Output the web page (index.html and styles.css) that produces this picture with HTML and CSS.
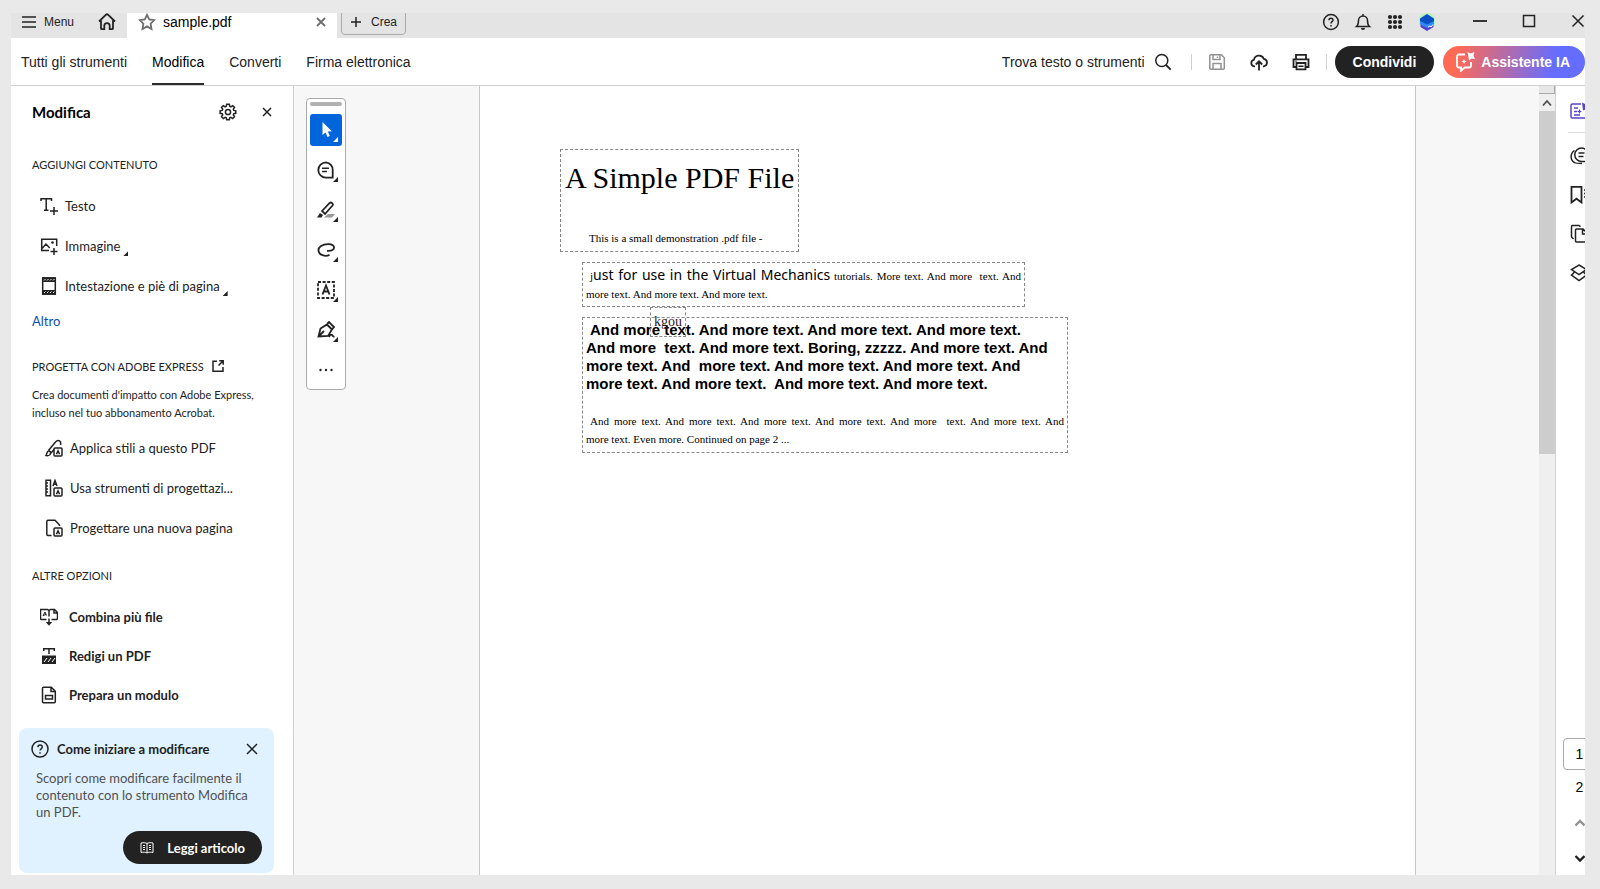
FILE: index.html
```html
<!DOCTYPE html>
<html lang="it">
<head>
<meta charset="utf-8">
<title>sample.pdf</title>
<link rel="stylesheet" href="styles.css">
</head>
<body>
<div class="app">
  <header class="tabbar">
    <button class="menu"><svg class="ic18" viewBox="0 0 18 18"><path d="M2 4h14M2 9h14M2 14h14"/></svg>Menu</button>
    <button class="home" aria-label="Home"><svg class="ic18" viewBox="0 0 18 18"><path class="heavy" d="M1 8.500 7.800 1.800a1.700 1.700 0 0 1 2.400 0L17 8.500M3 7.500v7.700c0 .7.4 1 1 1h2.300v-3.400a2.700 2.700 0 0 1 5.400 0v3.400H14c.6 0 1-.3 1-1V7.500"/></svg></button>
    <div class="tab">
      <svg class="ic18 grey" viewBox="0 0 18 18"><path class="heavy" d="m9 1.800 2.200 4.600 5 .7-3.600 3.600.9 5.300L9 13.400 4.500 16l.9-5.300L1.800 7.100l5-.7z"/></svg>
      <span class="tab-name">sample.pdf</span>
      <button class="tab-close" aria-label="Chiudi scheda"><svg class="ic10 grey" viewBox="0 0 10 10"><path class="heavy" d="m1 1 8 8M9 1 1 9"/></svg></button>
    </div>
    <button class="create"><svg class="ic10" viewBox="0 0 10 10"><path d="M5 0v10M0 5h10"/></svg>Crea</button>
    <div class="system">
      <button aria-label="Guida"><svg class="ic18" viewBox="0 0 18 18"><circle cx="9" cy="9" r="7.400"/><path d="M7 7.200c0-2.600 4-2.600 4 0 0 1.500-2 1.500-2 3.200M9 12v1.500"/></svg></button>
      <button aria-label="Notifiche"><svg class="ic18" viewBox="0 0 18 18"><path d="M2.500 13.500c2-1.700 2-3.500 2-6a4.500 4.500 0 0 1 9 0c0 2.500 0 4.300 2 6zM9 1v2"/><path class="fill" d="M7 15h4a2 2 0 0 1-4 0z"/></svg></button>
      <button aria-label="App"><svg class="ic18" viewBox="0 0 18 18"><g class="fill"><circle cx="4" cy="4" r="2.100"/><circle cx="9" cy="4" r="2.100"/><circle cx="14" cy="4" r="2.100"/><circle cx="4" cy="9" r="2.100"/><circle cx="9" cy="9" r="2.100"/><circle cx="14" cy="9" r="2.100"/><circle cx="4" cy="14" r="2.100"/><circle cx="9" cy="14" r="2.100"/><circle cx="14" cy="14" r="2.100"/></g></svg></button>
      <button aria-label="Profilo"><svg class="ic18" viewBox="0 0 18 18"><circle cx="9" cy="8.500" r="8.500" fill="#b4f5bd" stroke="none"/><path d="m2.500 10 6.500 3 6.500-3v4L9 18l-6.500-4z" fill="#5a3fd0" stroke="none"/><path d="m2 6 7 4 7-4v5l-7 4-7-4z" fill="#2f8bff" stroke="none"/><path d="m9 1 7 4.500V8l-7 3.500L2 8V5.500z" fill="#0b4fc4" stroke="none"/><path d="m10 14 2-1 1 1 2-2.500" stroke="#fff" stroke-width="1"/></svg></button>
    </div>
    <div class="window-buttons">
      <button aria-label="Riduci"><svg class="ic14" viewBox="0 0 14 14"><path class="heavy" d="M0 7h14"/></svg></button>
      <button aria-label="Ingrandisci"><svg class="ic14" viewBox="0 0 14 14"><path d="M1.500 1.500h11v11h-11z"/></svg></button>
      <button aria-label="Chiudi"><svg class="ic14" viewBox="0 0 14 14"><path d="m1.500 1.500 11 11M12.500 1.500l-11 11"/></svg></button>
    </div>
  </header>

  <div class="toolbar">
    <nav class="modes">
      <a href="#tutti">Tutti gli strumenti</a>
      <a href="#modifica" class="current">Modifica</a>
      <a href="#converti">Converti</a>
      <a href="#firma">Firma elettronica</a>
    </nav>
    <div class="actions">
      <button class="find">Trova testo o strumenti<svg class="ic18" viewBox="0 0 18 18"><circle cx="7.800" cy="7.500" r="6"/><path class="heavy" d="m12 12 4.700 4.700"/></svg></button>
      <span class="rule"></span>
      <button class="tool" aria-label="Salva"><svg class="ic18 pale" viewBox="0 0 18 18"><path d="M1.800 2.800c0-.6.400-1 1-1h10.500l3 3v10.400c0 .6-.4 1-1 1H2.800c-.6 0-1-.4-1-1zM5 2v4.500h7V2M5 16v-5.500h8V16M9.500 3.500v1.500"/></svg></button>
      <button class="tool" aria-label="Carica"><svg class="ic18" viewBox="0 0 18 18"><path class="heavy" d="M5 13.300H4.200a3.300 3.300 0 0 1-.3-6.500 5.200 5.200 0 0 1 9.900-1 3.800 3.800 0 0 1 0 7.500H13M9 17.500V9M5.800 11.500 9 8.300l3.200 3.200"/></svg></button>
      <button class="tool" aria-label="Stampa"><svg class="ic18" viewBox="0 0 18 18"><path class="heavy" d="M4 6V1.800h10V6M4 14H1.500V6.300h15V14H14M4.500 10h9v6.300h-9z"/><path d="M6.500 13.200h5M3.500 8.300h1"/></svg></button>
      <span class="rule"></span>
      <button class="share">Condividi</button>
      <button class="assistant"><svg class="ic20" viewBox="0 0 20 20"><path class="heavy" d="M10 2.500H4c-1.300 0-2 .7-2 2v9c0 1.300.7 2 2 2h2v3.200l3.700-3.200H14c1.300 0 2-.7 2-2V10"/><path class="fill" d="m12.500 0 3 1.500L19.500 0l-1 3.500 1.500 3.500-3.500-.5-2.500 2-.5-3.500zM9 7l.8 1.700 1.700.8-1.700.8L9 12l-.8-1.700-1.700-.8 1.700-.8z"/></svg>Assistente IA</button>
    </div>
  </div>

  <main class="workspace">
    <aside class="sidebar">
      <div class="panel-head">
        <h2>Modifica</h2>
        <button aria-label="Impostazioni"><svg class="ic18" viewBox="0 0 18 18"><circle cx="9" cy="9" r="2.600"/><path d="M7.700 1.200h2.600l.4 2.100 1.200.5 1.800-1.200 1.800 1.800-1.200 1.800.5 1.200 2 .4v2.500l-2 .4-.5 1.200 1.200 1.800-1.800 1.800-1.800-1.200-1.200.5-.4 2H7.700l-.4-2-1.200-.5-1.800 1.200-1.800-1.800 1.200-1.800-.5-1.200-2.100-.4V7.800l2.100-.4.5-1.200-1.200-1.800 1.800-1.800 1.800 1.200 1.200-.5z"/></svg></button>
        <button aria-label="Chiudi pannello"><svg class="ic10" viewBox="0 0 10 10"><path d="m1 1 8 8M9 1 1 9"/></svg></button>
      </div>

      <h3 class="first">Aggiungi contenuto</h3>
      <ul class="items">
        <li><button><svg class="ic18" viewBox="0 0 18 18"><path d="M1 4V1.700h10.500V4M6.200 2v11M4 13.300h4.500M14 10v8M10 14h8"/></svg>Testo</button></li>
        <li><button><svg class="ic18" viewBox="0 0 18 18"><path d="M9 13.500H1.700V2.200h15V9M2 11.500l4-4.500 3.700 4M14 11v7M10.500 14.500h7"/><circle class="fill" cx="12.500" cy="5.500" r="1.300"/></svg>Immagine<i class="corner"></i></button></li>
        <li><button><svg class="ic18" viewBox="0 0 18 18"><path d="M2.700 1h12.600v16H2.700z"/><path class="fill" d="M2 .3h14v4.700H2zM2 13h14v4.700H2z"/><path stroke="#fff" stroke-width="1" d="m4 3.500 1.500-1.500M7 3.500 8.500 2M10 3.500 11.500 2M13 3.500 14.500 2M4 16l1.500-1.500M7 16l1.500-1.500M10 16l1.500-1.500M13 16l1.500-1.500"/></svg>Intestazione e piè di pagina<i class="corner"></i></button></li>
      </ul>
      <a class="more" href="#altro">Altro</a>

      <h3>Progetta con Adobe Express <svg class="ic12" viewBox="0 0 12 12"><path d="M5 1.200H1v10h10V7M7.200.8h4v4M11 1 6.500 5.500"/></svg></h3>
      <p class="note">Crea documenti d'impatto con Adobe Express, incluso nel tuo abbonamento Acrobat.</p>
      <ul class="items express">
        <li><button><svg class="ic18" viewBox="0 0 18 18"><path d="M1 16.500c1-1 .5-4 2.500-4.500s3 2.500 1 4c-1 .7-2.500.7-3.500.5zM3.500 11.500 10.500 3c3-3.300 6-.5 5 3M6 14l3-3.500"/><path d="M10 9h6c.7 0 1 .3 1 1v6c0 .7-.3 1-1 1h-6c-.7 0-1-.3-1-1v-6c0-.7.3-1 1-1zM11.500 15.300l1.500-3.500 1.500 3.500"/></svg>Applica stili a questo PDF</button></li>
        <li><button><svg class="ic18" viewBox="0 0 18 18"><path d="M1 1.200h4.500v15.600H1zM1 4h2M1 7h2M1 10h2M1 13h2M8 7l2-5.500L12 7M8.600 5.200h2.800"/><path d="M10 9h6c.7 0 1 .3 1 1v6c0 .7-.3 1-1 1h-6c-.7 0-1-.3-1-1v-6c0-.7.3-1 1-1zM11.500 15.300l1.500-3.500 1.500 3.500"/></svg>Usa strumenti di progettazi...</button></li>
        <li><button><svg class="ic18" viewBox="0 0 18 18"><path d="M6.500 16.500H3c-.8 0-1.200-.4-1.200-1.200V2.500c0-.8.400-1.200 1.200-1.200h7L14.500 6v1"/><path d="M10 9h6c.7 0 1 .3 1 1v6c0 .7-.3 1-1 1h-6c-.7 0-1-.3-1-1v-6c0-.7.3-1 1-1zM11.500 15.300l1.500-3.500 1.500 3.500"/></svg>Progettare una nuova pagina</button></li>
      </ul>

      <h3 class="last">Altre opzioni</h3>
      <ul class="items strong">
        <li><button><svg class="ic18" viewBox="0 0 18 18"><path d="M6.500 11.500H1.500c-.6 0-1-.3-1-1V1.500h7l1.500 1 1.500-1h4l3 3v6c0 .7-.4 1-1 1h-5M9 2.500v6M14 1.500V5h3M9 10.500v4"/><path stroke-width="1" d="m3 8 2-4 1.500 3.500M3 7.500l3-1"/><path class="fill" d="M5.800 14h6.400L9 17.800z"/></svg>Combina più file</button></li>
        <li><button><svg class="ic18" viewBox="0 0 18 18"><path d="M3.700 4V1.700h10.600V4M9 2v5"/><path class="fill" d="M2 8.500h14V17H2z"/><path stroke="#fff" stroke-width="1" d="m4 15 3-4M8 15l3-4M12 15l3-4"/></svg>Redigi un PDF</button></li>
        <li><button><svg class="ic18" viewBox="0 0 18 18"><path d="M3.500 1.200h7.800l4 4v10.600c0 .7-.4 1-1 1H3.500c-.6 0-1-.3-1-1V2.200c0-.7.4-1 1-1zM11 1.500v4h4M5.500 9.500h7v3.500h-7z"/></svg>Prepara un modulo</button></li>
      </ul>

      <section class="card">
        <div class="card-head">
          <svg class="ic18" viewBox="0 0 18 18"><circle cx="9" cy="9" r="8"/><path d="M7 7.200c0-2.800 4.200-2.800 4.200 0 0 1.600-2.200 1.600-2.200 3.400M9 12.200v1.500"/></svg>
          <h4>Come iniziare a modificare</h4>
          <button aria-label="Chiudi suggerimento"><svg class="ic12" viewBox="0 0 12 12"><path d="m1 1 10 10M11 1 1 11"/></svg></button>
        </div>
        <p>Scopri come modificare facilmente il contenuto con lo strumento Modifica un PDF.</p>
        <button class="read"><svg class="ic14" viewBox="0 0 14 14"><path d="M7 2.500C5.500 1.500 3 1.500 1 2v9.500c2-.5 4.500-.5 6 .5 1.500-1 4-1 6-.5V2c-2-.5-4.500-.5-6 .5zM7 2.500V12M3 4.500h2M3 6.500h2M3 8.500h2M9 4.500h2M9 6.500h2M9 8.500h2"/></svg>Leggi articolo</button>
      </section>
    </aside>

    <section class="canvas">
      <div class="gutter">
        <div class="palette">
          <span class="grip"></span>
          <button class="on" aria-label="Seleziona"><svg class="ic18" viewBox="0 0 18 18"><path class="fill" d="M5.500 1v13l3-2.500 2 4.500 2.300-1-2-4.500 4-.3z"/></svg><i class="corner"></i></button>
          <button aria-label="Commento"><svg class="ic18" viewBox="0 0 18 18"><path class="heavy" d="M9 1.300a7.700 7.700 0 1 0 0 15.400h6.700V9A7.500 7.500 0 0 0 9 1.300z"/><path d="M5 7.300h7M5 10.500h5"/></svg><i class="corner"></i></button>
          <button aria-label="Evidenzia"><svg class="ic18" viewBox="0 0 18 18"><path d="M7 16.500h8l3-3.500h-7z" fill="#999" stroke="none"/><path class="heavy" d="m5 10 7.700-8c1.500-1.300 4 .8 2.800 2.500L8 13z"/><path class="fill" d="M0 16.500 3 12l3 2-1.500 2.500z"/></svg><i class="corner"></i></button>
          <button aria-label="Disegna"><svg class="ic18" viewBox="0 0 18 18"><path class="heavy" d="M10 9.800c4.500.5 7.500-1.300 7-3.800C16.300 2.300 8 2.300 4 5c-4 2.800-3 7.800 1.500 9.200 3 1 5.500.5 7-.5"/></svg><i class="corner"></i></button>
          <button aria-label="Testo"><svg class="ic18" viewBox="0 0 18 18"><path class="heavy" d="M1 1h16v16H1z" stroke-dasharray="3 1.600"/><path class="heavy" d="m5.500 13.500 3.500-9 3.500 9M6.500 10.500h5"/></svg><i class="corner"></i></button>
          <button aria-label="Firma"><svg class="ic18" viewBox="0 0 18 18"><path class="heavy" d="m1.500 15.500 2-8L10 3.500l5 5-4 6.500zM2 15l5-5M10 3l2-2 5 5-2 2.500M12 16c1-2 2-3 3-2s1 2 2.500 1.500"/></svg><i class="corner"></i></button>
          <button aria-label="Altri strumenti"><svg class="ic18" viewBox="0 0 18 18"><g class="fill"><circle cx="3.500" cy="9" r="1.200"/><circle cx="9" cy="9" r="1.200"/><circle cx="14.500" cy="9" r="1.200"/></g></svg></button>
        </div>
      </div>
      <article class="page">
        <div class="block title-block">
          <h1>A Simple PDF File</h1>
          <p class="subtitle">This is a small demonstration .pdf file -</p>
        </div>
        <div class="block intro-block">
          <p><span class="line full"><span class="indent">j</span><span class="sans">ust for use in the Virtual Mechanics</span> tutorials. More text. And more&nbsp; text. And</span>
          <span class="line">more text. And more text. And more text.</span></p>
          <div class="stray">kgou</div>
        </div>
        <div class="block body-block">
          <p class="bold"><span class="line"><span class="indent">And</span> more text. And more text. And more text. And more text.</span>
          <span class="line">And more&nbsp; text. And more text. Boring, zzzzz. And more text. And</span>
          <span class="line">more text. And&nbsp; more text. And more text. And more text. And</span>
          <span class="line">more text. And more text.&nbsp; And more text. And more text.</span></p>
          <p class="closing"><span class="line full"><span class="indent">And</span> more text. And more text. And more text. And more text. And more&nbsp; text. And more text. And</span>
          <span class="line">more text. Even more. Continued on page 2 ...</span></p>
        </div>
      </article>
      <div class="scrollbar">
        <span class="splitter"></span>
        <button aria-label="Scorri su"><svg class="ic10" viewBox="0 0 10 10"><path class="heavy" d="M1 7.500 5 3l4 4.500"/></svg></button>
        <span class="thumb"></span>
      </div>
    </section>

    <aside class="rail">
      <div class="rail-inner">
        <button class="accent" aria-label="Riepilogo"><svg class="ic20" viewBox="0 0 20 20"><path d="M11 3H2.500C1.500 3 1 3.500 1 4.500v11c0 1 .5 1.500 1.500 1.500h14V12M4 7h4M4 10.500h3M4 14h6"/><path class="fill" d="m12 1.500 3 1.500 3-2 1 8-3-.5-3 1zM9.500 8l.8 1.700 1.700.8-1.700.8-.8 1.700-.8-1.700-1.700-.8 1.700-.8z"/></svg></button>
        <button aria-label="Commenti"><svg class="ic20" viewBox="0 0 20 20"><path d="M11.500 2a6.500 6.500 0 1 0 0 13.500H18V8.500A6.500 6.500 0 0 0 11.500 2zM4.500 4.500C0 7.500 0 14 4.500 16.500c1.500 1 4 1 7.500 1M8.500 7h6M8.500 10.500h5"/></svg></button>
        <button aria-label="Segnalibri"><svg class="ic20" viewBox="0 0 20 20"><path class="heavy" d="M1.500 1.800h10v15.700l-5-3.800-5 3.800z"/><path d="M14 5h3M14 8.500h3M14 12h3"/></svg></button>
        <button aria-label="Pagine"><svg class="ic20" viewBox="0 0 20 20"><path d="M6.500 5h6.500l4.500 4.500V18h-11c-.7 0-1-.3-1-1V6c0-.7.3-1 1-1zM12.500 5.500V10h5M3.500 15 1.500 13V2.800c0-.7.3-1.300 1-1.300H9l1.500 1.200"/></svg></button>
        <button aria-label="Livelli"><svg class="ic20" viewBox="0 0 20 20"><path d="m9 2 7.500 4.500L9 11.500 1.500 6.500zM4.500 9l-3 3.200L9 17.500l7.500-5.300-3-3.200"/></svg></button>
        <div class="pager">
          <input type="text" value="1" aria-label="Pagina corrente">
          <span>2</span>
          <button aria-label="Pagina precedente"><svg class="ic12 pale" viewBox="0 0 12 12"><path class="thick" d="M1.500 8.500 6 4l4.500 4.500"/></svg></button>
          <button aria-label="Pagina successiva"><svg class="ic12" viewBox="0 0 12 12"><path class="thick" d="M1.500 4 6 8.500 10.500 4"/></svg></button>
        </div>
      </div>
    </aside>
  </main>
</div>
</body>
</html>
```
FILE: styles.css
```css
* { box-sizing: border-box; }

body {
  margin: 0;
  padding: 13px 15px 14px 11px;
  height: 100vh;
  display: flex;
  background: #e9e9e9;
  font: 14px "Liberation Sans", Arial, sans-serif;
  color: #222;
}

h1, h2, h3, h4, p, ul { margin: 0; padding: 0; }
ul { list-style: none; }
a { color: inherit; text-decoration: none; }

button {
  display: flex;
  align-items: center;
  justify-content: center;
  padding: 0;
  border: 0;
  background: none;
  font: inherit;
  color: inherit;
  white-space: nowrap;
}

svg { display: block; flex: none; fill: none; stroke: currentColor; stroke-width: 1.5; }
.fill { fill: currentColor; stroke: none; }
.heavy { stroke-width: 1.8; }
.thick { stroke-width: 2.4; }
.ic10 { width: 10px; height: 10px; }
.ic12 { width: 12px; height: 12px; }
.ic14 { width: 14px; height: 14px; }
.ic18 { width: 18px; height: 18px; }
.ic20 { width: 20px; height: 20px; }
.grey { color: #6e6e6e; }
.pale { color: #929292; }

.app { flex: 1; min-width: 0; display: flex; flex-direction: column; overflow: hidden; background: #fff; }

/* Tab bar */
.tabbar { height: 25px; display: flex; align-items: center; padding: 0 0 7px 9px; background: #e4e4e4; }
.menu { gap: 6px; font-size: 12px; }
.home { margin: 0 11px 0 24px; }
.tab { align-self: flex-start; display: flex; align-items: center; gap: 7px; width: 210px; height: 25px; padding: 0 11px 7px 11px; background: #fff; color: #000; }
.tab-name { flex: 1; }
.create { gap: 10px; height: 25px; margin-left: 4px; padding: 0 8px 0 9px; border: 1px solid #aaa; border-radius: 4px; font-size: 12px; }
.system { display: flex; gap: 14px; margin: 0 37px 0 auto; }
.window-buttons { display: flex; gap: 35px; padding-bottom: 3px; }

/* Main toolbar */
.toolbar { height: 48px; display: flex; align-items: stretch; justify-content: space-between; padding-left: 10px; border-bottom: 1px solid #d0d0d0; }
.modes { display: flex; gap: 25px; }
.modes a { display: flex; align-items: center; padding-top: 2px; border-bottom: 2px solid transparent; white-space: nowrap; }
.modes .current { color: #000; border-color: #2c2c2c; }
.actions { display: flex; align-items: center; }
.find { gap: 9px; margin-right: 19px; }
.rule { width: 1px; height: 16px; background: #d0d0d0; }
.tool { width: 18px; margin: 0 8px 0 16px; }
.tool + .rule { margin: 0 8px; }
.share, .assistant { height: 32px; border-radius: 16px; color: #fff; font-weight: bold; }
.share { padding: 0 18px; background: #222; }
.assistant { gap: 6px; margin-left: 9px; padding: 0 15px 0 12px; background: linear-gradient(100deg, #ff6a55 10%, #656dff 78%); }

.workspace { flex: 1; min-height: 0; display: flex; }

/* Edit panel */
.sidebar { flex: none; width: 283px; border-right: 1px solid #d0d0d0; padding-right: 19px; font: 13px Lato, "Noto Sans", sans-serif; }
.panel-head { display: flex; align-items: center; gap: 23px; height: 52px; padding-left: 21px; }
.panel-head h2 { margin-right: auto; font-size: 15px; color: #000; }
.panel-head button:last-child { width: 14px; }
.sidebar h3 { display: flex; align-items: center; gap: 8px; height: 20px; margin-top: 25px; padding-left: 21px; font-size: 11px; font-weight: normal; text-transform: uppercase; }
.sidebar .first { margin: 16px 0 12px; }
.sidebar .last { margin: 17px 0 12px; }
.items button { gap: 7px; height: 40px; padding-left: 29px; }
.express { padding-top: 6px; }
.express button { padding-left: 34px; }
.strong button { gap: 11px; height: 39px; font-weight: bold; }
.corner { align-self: flex-end; width: 5px; height: 5px; background: currentColor; clip-path: polygon(100% 0, 100% 100%, 0 100%); }
.items .corner { margin: 0 0 10px -4px; }
.more { display: block; margin-top: 5px; padding-left: 21px; line-height: 20px; color: #0d4fb8; }
.note { margin-top: 10px; padding-left: 21px; font-size: 11px; line-height: 18px; }

.card { margin: 14px 0 0 8px; padding: 9px 12px; border-radius: 8px; background: #e0f2ff; }
.card-head { display: flex; align-items: center; gap: 8px; height: 24px; }
.card-head h4 { flex: 1; font-size: 13px; }
.card-head button { margin-right: 4px; }
.card p { margin: 9px 0 10px; padding-left: 5px; line-height: 17px; color: #505050; }
.read { gap: 13px; height: 33px; margin-left: auto; padding: 0 17px; border-radius: 17px; background: #222; color: #fff; font-weight: bold; }
.read svg { stroke-width: 1; }

/* Document area */
.canvas { flex: 1; min-width: 0; display: flex; background: #f7f7f7; }
.gutter { flex: none; width: 185px; padding: 12px 0 0 12px; }
.palette { display: flex; flex-direction: column; align-items: center; gap: 8px; width: 40px; padding: 3px; border: 1px solid #aaa; border-radius: 4px; background: #fff; }
.grip { width: 32px; height: 4px; border-radius: 2px; background: #b1b1b1; }
.palette button { position: relative; width: 32px; height: 32px; border-radius: 3px; }
.palette .on { background: #0265dc; color: #fff; }
.palette .corner { position: absolute; right: 4px; bottom: 4px; }

.page { flex: 1; min-width: 0; padding: 63px 0 0 80px; border: solid #c8c8c8; border-width: 0 1px; background: #fff; color: #000; font: 11px "Liberation Serif", "Times New Roman", serif; }
.block { border: 1px dashed #888; }
.line { display: block; white-space: nowrap; }
.full { text-align: justify; text-align-last: justify; white-space: normal; }
.indent { margin-left: 4px; }
.title-block { width: 239px; height: 103px; padding: 8px 4px 0; }
.title-block h1 { font-size: 30px; line-height: 40px; font-weight: normal; white-space: nowrap; }
.subtitle { margin-top: 31px; padding-left: 24px; line-height: 18px; white-space: nowrap; }
.intro-block { position: relative; width: 443px; margin: 10px 0 0 22px; padding: 4px 3px 3px; line-height: 18px; }
.sans { font: 14px/14px "Noto Sans", sans-serif; }
.stray { position: absolute; left: 67px; top: 44px; padding: 4px 3px; border: 1px dashed #888; font-size: 14px; line-height: 20px; color: #301820; }
.body-block { width: 486px; margin: 10px 0 0 22px; padding: 3px 3px 4px; line-height: 18px; }
.bold { font: bold 15px/18px "Liberation Sans", Arial, sans-serif; }
.closing { margin-top: 19px; }

.scrollbar { flex: none; display: flex; flex-direction: column; width: 16px; margin-left: 123px; background: #efefef; }
.splitter { height: 8px; border: solid #aaa; border-width: 0 1px 1px 0; background: #e6e6e6; }
.scrollbar button { height: 17px; color: #505050; }
.thumb { height: 343px; background: #cdcdcd; }

/* Right rail */
.rail { flex: none; width: 30px; border-left: 1px solid #d0d0d0; overflow: hidden; }
.rail-inner { display: flex; flex-direction: column; align-items: center; width: 47px; height: 100%; padding-top: 4px; }
.rail-inner button { flex: none; width: 24px; height: 39px; }
.rail-inner .accent { height: 43px; margin-bottom: 3px; border-bottom: 1px solid #ddd; color: #5843d0; }
.pager { display: flex; flex-direction: column; align-items: center; margin-top: auto; }
.pager input { width: 34px; height: 32px; padding: 0; border: 1px solid #aaa; border-radius: 4px; font: inherit; color: #000; text-align: center; background: #fff; }
.pager span { line-height: 35px; color: #000; }
.rail-inner .pager button { height: 35px; }
```
